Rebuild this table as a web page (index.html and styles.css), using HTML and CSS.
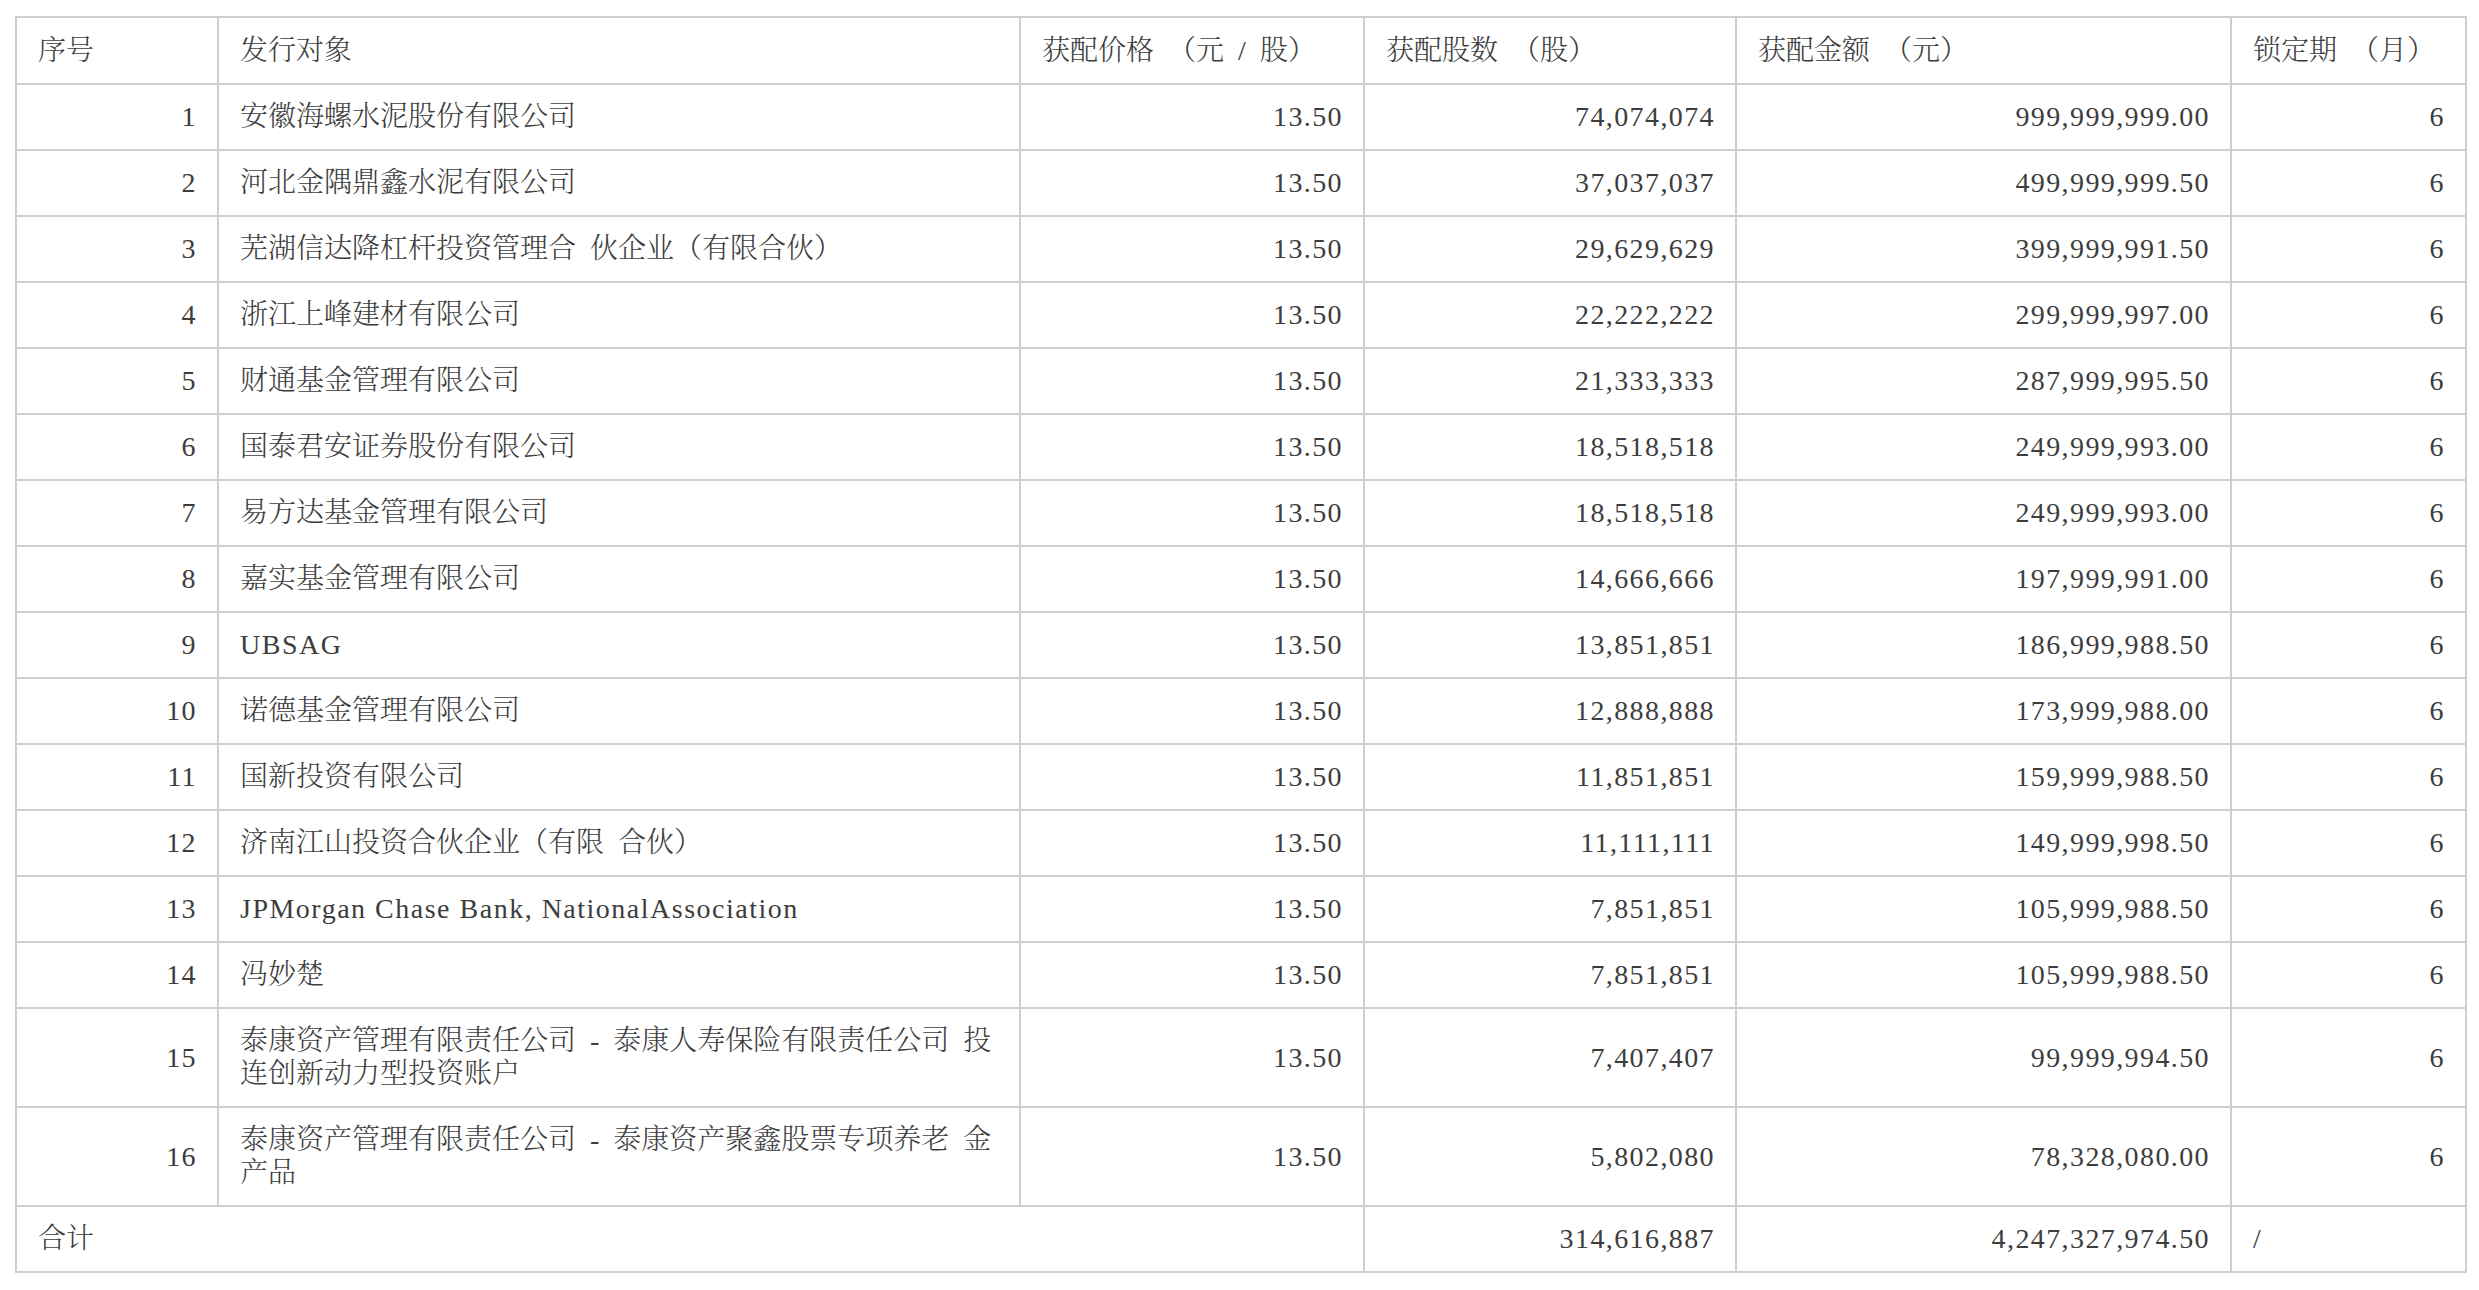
FILE: index.html
```html
<!DOCTYPE html>
<html lang="zh-CN">
<head>
<meta charset="utf-8">
<title>获配情况</title>
<link rel="stylesheet" href="styles.css">
</head>
<body>
<div class="page">
<table class="alloc">
  <colgroup>
    <col class="c-no">
    <col class="c-name">
    <col class="c-price">
    <col class="c-shares">
    <col class="c-amount">
    <col class="c-lock">
  </colgroup>
  <thead>
    <tr>
      <th>序号</th>
      <th>发行对象</th>
      <th>获配价格 （元 / 股）</th>
      <th>获配股数 （股）</th>
      <th>获配金额 （元）</th>
      <th>锁定期 （月）</th>
    </tr>
  </thead>
  <tbody>
    <tr><td class="num">1</td><td>安徽海螺水泥股份有限公司</td><td class="num">13.50</td><td class="num">74,074,074</td><td class="num">999,999,999.00</td><td class="num">6</td></tr>
    <tr><td class="num">2</td><td>河北金隅鼎鑫水泥有限公司</td><td class="num">13.50</td><td class="num">37,037,037</td><td class="num">499,999,999.50</td><td class="num">6</td></tr>
    <tr><td class="num">3</td><td>芜湖信达降杠杆投资管理合 伙企业（有限合伙）</td><td class="num">13.50</td><td class="num">29,629,629</td><td class="num">399,999,991.50</td><td class="num">6</td></tr>
    <tr><td class="num">4</td><td>浙江上峰建材有限公司</td><td class="num">13.50</td><td class="num">22,222,222</td><td class="num">299,999,997.00</td><td class="num">6</td></tr>
    <tr><td class="num">5</td><td>财通基金管理有限公司</td><td class="num">13.50</td><td class="num">21,333,333</td><td class="num">287,999,995.50</td><td class="num">6</td></tr>
    <tr><td class="num">6</td><td>国泰君安证券股份有限公司</td><td class="num">13.50</td><td class="num">18,518,518</td><td class="num">249,999,993.00</td><td class="num">6</td></tr>
    <tr><td class="num">7</td><td>易方达基金管理有限公司</td><td class="num">13.50</td><td class="num">18,518,518</td><td class="num">249,999,993.00</td><td class="num">6</td></tr>
    <tr><td class="num">8</td><td>嘉实基金管理有限公司</td><td class="num">13.50</td><td class="num">14,666,666</td><td class="num">197,999,991.00</td><td class="num">6</td></tr>
    <tr><td class="num">9</td><td class="latin">UBSAG</td><td class="num">13.50</td><td class="num">13,851,851</td><td class="num">186,999,988.50</td><td class="num">6</td></tr>
    <tr><td class="num">10</td><td>诺德基金管理有限公司</td><td class="num">13.50</td><td class="num">12,888,888</td><td class="num">173,999,988.00</td><td class="num">6</td></tr>
    <tr><td class="num">11</td><td>国新投资有限公司</td><td class="num">13.50</td><td class="num">11,851,851</td><td class="num">159,999,988.50</td><td class="num">6</td></tr>
    <tr><td class="num">12</td><td>济南江山投资合伙企业（有限 合伙）</td><td class="num">13.50</td><td class="num">11,111,111</td><td class="num">149,999,998.50</td><td class="num">6</td></tr>
    <tr><td class="num">13</td><td class="latin">JPMorgan Chase Bank, NationalAssociation</td><td class="num">13.50</td><td class="num">7,851,851</td><td class="num">105,999,988.50</td><td class="num">6</td></tr>
    <tr><td class="num">14</td><td>冯妙楚</td><td class="num">13.50</td><td class="num">7,851,851</td><td class="num">105,999,988.50</td><td class="num">6</td></tr>
    <tr><td class="num">15</td><td>泰康资产管理有限责任公司 - 泰康人寿保险有限责任公司 投<br>连创新动力型投资账户</td><td class="num">13.50</td><td class="num">7,407,407</td><td class="num">99,999,994.50</td><td class="num">6</td></tr>
    <tr><td class="num">16</td><td>泰康资产管理有限责任公司 - 泰康资产聚鑫股票专项养老 金<br>产品</td><td class="num">13.50</td><td class="num">5,802,080</td><td class="num">78,328,080.00</td><td class="num">6</td></tr>
    <tr class="total"><td colspan="3">合计</td><td class="num">314,616,887</td><td class="num">4,247,327,974.50</td><td>/</td></tr>
  </tbody>
</table>
</div>
</body>
</html>
```

FILE: styles.css
```css
html, body {
  margin: 0;
  padding: 0;
  background: #ffffff;
}

.page {
  padding: 16px 14px 20px 15px;
}

.alloc {
  border-collapse: collapse;
  table-layout: fixed;
  width: 2450px;
  font-family: "Liberation Serif", "Noto Serif CJK SC", "Noto Sans CJK SC", serif;
  font-size: 28px;
  font-weight: 300;
  color: #3d3d3d;
}

.c-no { width: 202px; }
.c-name { width: 802px; }
.c-price { width: 344px; }
.c-shares { width: 372px; }
.c-amount { width: 495px; }
.c-lock { width: 235px; }

.alloc th,
.alloc td {
  border: 2px solid #cfcfcf;
  padding: 15.5px 21px 15.5px 21px;
  line-height: 33px;
  vertical-align: middle;
  text-align: left;
  font-weight: 300;
  white-space: nowrap;
  word-spacing: 7px;
}

.alloc th {
  padding-top: 16px;
}

.alloc td.num {
  text-align: right;
  letter-spacing: 1.4px;
  padding-right: 20px;
}

.alloc td.latin {
  letter-spacing: 1.5px;
  word-spacing: 0;
}
```
